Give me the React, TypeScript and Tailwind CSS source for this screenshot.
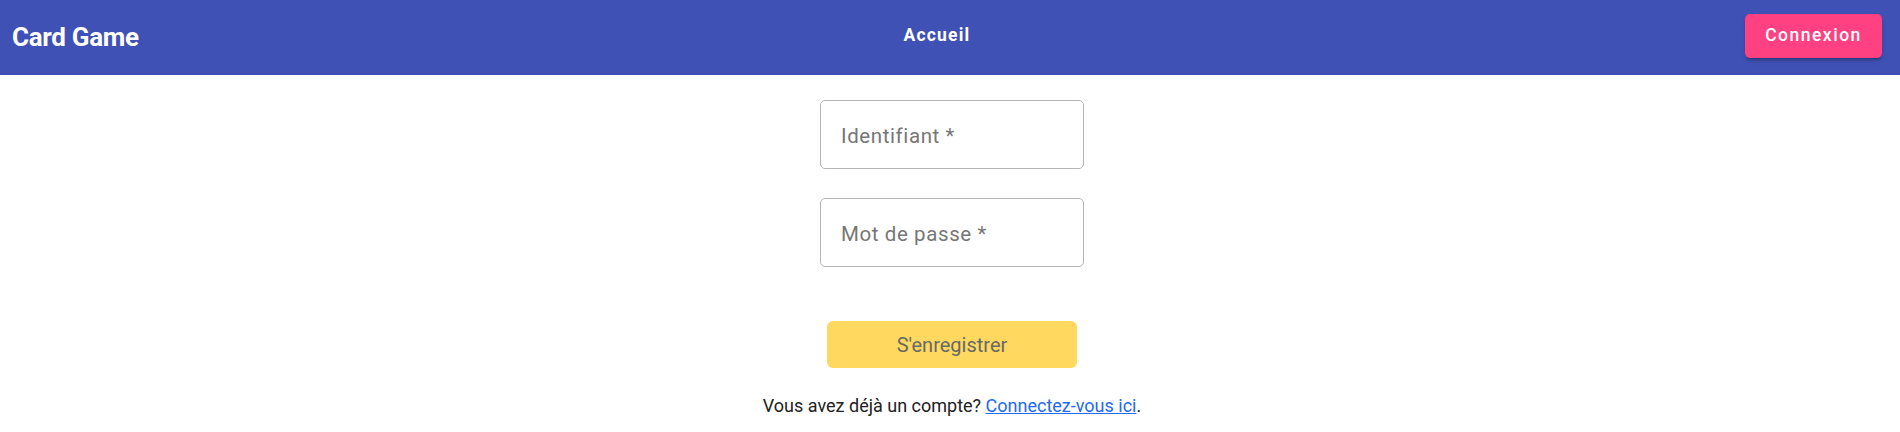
import React from "react";

export default function App() {
  return (
    <div className="min-h-screen bg-white font-['Roboto',sans-serif]">
      {/* Barre du haut */}
      <header className="h-[75px] bg-[#3f51b5] flex items-center justify-between pl-[12px] pr-[18px]">
        <span className="text-white text-[26px] font-bold tracking-[-0.3px]">
          Card Game
        </span>
        <a className="text-white text-[17.5px] font-bold tracking-[1.2px] mr-[10px] mt-[-4px]">
          Accueil
        </a>
        <button className="w-[137px] h-[44px] rounded-[5px] bg-[#ff4081] text-white text-[17.5px] font-medium tracking-[1.5px] shadow-[0_3px_3px_-2px_rgba(0,0,0,0.3),0_3px_5px_0_rgba(0,0,0,0.14)] mt-[-4px]">
          Connexion
        </button>
      </header>

      {/* Formulaire */}
      <main className="flex flex-col items-center pt-[25px] pl-[4px]">
        <input
          className="w-[264px] h-[69px] border border-[#b5b5b5] rounded-[5px] px-[20px] pt-[2px] text-[20.5px] tracking-[0.6px] text-[#333] placeholder:text-[#767676] outline-none"
          placeholder="Identifiant *"
        />
        <input
          type="password"
          className="mt-[29px] w-[264px] h-[69px] border border-[#b5b5b5] rounded-[5px] px-[20px] pt-[2px] text-[20.5px] tracking-[0.6px] text-[#333] placeholder:text-[#767676] outline-none"
          placeholder="Mot de passe *"
        />
        <button className="mt-[54px] w-[250px] h-[47px] rounded-[6px] bg-[#ffd95f] text-[#686868] text-[20px]">
          S'enregistrer
        </button>
        <p className="mt-[27px] text-[18px] text-[#212121] leading-[22px]">
          Vous avez déjà un compte?{" "}
          <a href="#" className="text-[#2369f0] underline">
            Connectez-vous ici
          </a>
          .
        </p>
      </main>
    </div>
  );
}
